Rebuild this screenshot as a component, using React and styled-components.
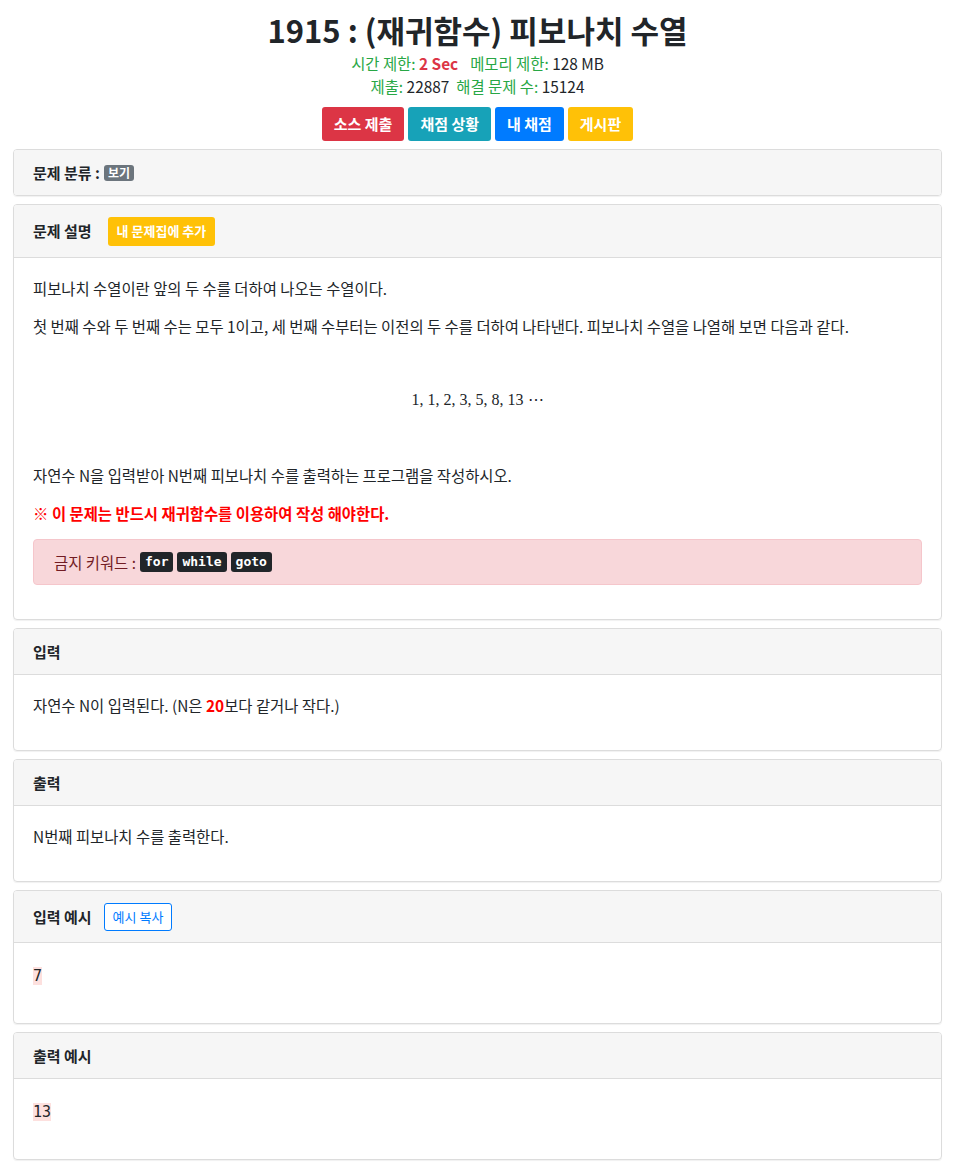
import styled, { createGlobalStyle } from 'styled-components';

const GlobalStyle = createGlobalStyle`
  body {
    margin: 0;
    background: #fff;
    color: #212529;
    font-family: "Noto Sans CJK KR", "Noto Sans", sans-serif;
    font-size: 15.4px;
    line-height: 22px;
  }
  * { box-sizing: border-box; }
`;

const Page = styled.div`
  padding: 0 11px 8px 13px;
  display: flex;
  flex-direction: column;
  gap: 8px;
`;

const Head = styled.div`
  display: flex;
  flex-direction: column;
  align-items: center;
`;

const Title = styled.h1`
  margin: 11px 0 3px;
  font-size: 31px;
  line-height: 38px;
  font-weight: 700;
  color: #212529;
`;

const Meta = styled.div`
  font-size: 15.4px;
  line-height: 23px;
  display: flex;
  gap: ${(p) => p.$gap || 12}px;
`;

const Label = styled.span`
  color: #28a745;
`;

const Strong = styled.b`
  color: ${(p) => p.color || 'inherit'};
  font-weight: 700;
`;

const Buttons = styled.div`
  margin-top: 9px;
  display: flex;
  gap: 4px;
`;

const Btn = styled.span`
  display: inline-flex;
  align-items: center;
  height: 34px;
  padding: 0 12px;
  border-radius: 3px;
  background: ${(p) => p.bg};
  color: #fff;
  font-weight: 700;
  font-size: 15px;
`;

const Card = styled.section`
  border: 1px solid #dcdcdc;
  border-radius: 4px;
  box-shadow: 0 1px 1px rgba(0, 0, 0, 0.06);
  overflow: hidden;
`;

const CardHeader = styled.div`
  background: #f6f6f6;
  padding: 0 19px;
  height: ${(p) => p.$tall || 46}px;
  display: flex;
  align-items: center;
  gap: ${(p) => p.$gap || 4}px;
  font-weight: 700;
  font-size: 15px;
  border-bottom: ${(p) => (p.$last ? 'none' : '1px solid #dcdcdc')};
`;

const CardBody = styled.div`
  padding: 19px 19px 18px;
`;

const P = styled.p`
  margin: 0 0 16px;
  color: ${(p) => p.color || '#212529'};
  font-weight: ${(p) => (p.$bold ? 700 : 400)};
`;

const Formula = styled.div`
  text-align: center;
  font-family: "Liberation Serif", "DejaVu Serif", serif;
  font-size: 16px;
  padding: 52px 0 53px;
  line-height: 22px;
`;

const Badge = styled.span`
  display: inline-flex;
  align-items: center;
  height: 16px;
  padding: 0 4px;
  border-radius: 3px;
  background: #6c757d;
  color: #fff;
  font-size: 12px;
  font-weight: 700;
`;

const SmallBtn = styled.span`
  display: inline-flex;
  align-items: center;
  height: ${(p) => (p.$outline ? 28 : 29)}px;
  padding: 0 ${(p) => (p.$outline ? 8 : 9)}px;
  border-radius: 3px;
  font-size: 13px;
  font-weight: ${(p) => (p.$outline ? 400 : 700)};
  background: ${(p) => (p.$outline ? '#fff' : '#ffc107')};
  color: ${(p) => (p.$outline ? '#007bff' : '#fff')};
  border: ${(p) => (p.$outline ? '1px solid #007bff' : 'none')};
`;

const Alert = styled.div`
  background: #f8d7da;
  border: 1px solid #f5c6cb;
  border-radius: 4px;
  color: #721c24;
  padding: 11px 20px;
  margin-top: -1px;
  margin-bottom: 16px;
  display: flex;
  align-items: center;
  gap: 4px;
`;

const Keyword = styled.code`
  display: inline-flex;
  align-items: center;
  height: 20px;
  padding: 0 5px;
  border-radius: 3px;
  background: #212529;
  color: #fff;
  font-family: "DejaVu Sans Mono", monospace;
  font-weight: 700;
  font-size: 13px;
`;

const Sample = styled.pre`
  margin: 0 0 18px;
  padding: 3px 0 0;
  font-family: "DejaVu Sans Mono", monospace;
  font-size: 15px;
  line-height: 22px;
  span {
    background: #fde0de;
    color: #212529;
  }
`;

export default function App() {
  return (
    <>
      <GlobalStyle />
      <Page>
        <Head>
          <Title>1915 : (재귀함수) 피보나치 수열</Title>
          <Meta>
            <span>
              <Label>시간 제한:</Label> <Strong color="#dc3545">2 Sec</Strong>
            </span>
            <span>
              <Label>메모리 제한:</Label> 128 MB
            </span>
          </Meta>
          <Meta $gap={7}>
            <span>
              <Label>제출:</Label> 22887
            </span>
            <span>
              <Label>해결 문제 수:</Label> 15124
            </span>
          </Meta>
          <Buttons>
            <Btn bg="#dc3545">소스 제출</Btn>
            <Btn bg="#17a2b8">채점 상황</Btn>
            <Btn bg="#007bff">내 채점</Btn>
            <Btn bg="#ffc107">게시판</Btn>
          </Buttons>
        </Head>

        <Card>
          <CardHeader $last $tall={45}>
            문제 분류 : <Badge>보기</Badge>
          </CardHeader>
        </Card>

        <Card>
          <CardHeader $tall={53} $gap={16}>
            문제 설명 <SmallBtn>내 문제집에 추가</SmallBtn>
          </CardHeader>
          <CardBody>
            <P>피보나치 수열이란 앞의 두 수를 더하여 나오는 수열이다.</P>
            <P style={{ marginBottom: 0 }}>
              첫 번째 수와 두 번째 수는 모두 1이고, 세 번째 수부터는 이전의 두 수를 더하여 나타낸다. 피보나치 수열을 나열해 보면 다음과 같다.
            </P>
            <Formula>1, 1, 2, 3, 5, 8, 13 ⋯</Formula>
            <P>자연수 N을 입력받아 N번째 피보나치 수를 출력하는 프로그램을 작성하시오.</P>
            <P color="#ff0000" $bold>
              ※ 이 문제는 반드시 재귀함수를 이용하여 작성 해야한다.
            </P>
            <Alert>
              금지 키워드 : <Keyword>for</Keyword>
              <Keyword>while</Keyword>
              <Keyword>goto</Keyword>
            </Alert>
          </CardBody>
        </Card>

        <Card>
          <CardHeader>입력</CardHeader>
          <CardBody>
            <P>
              자연수 N이 입력된다. (N은 <Strong color="#ff0000">20</Strong>보다 같거나 작다.)
            </P>
          </CardBody>
        </Card>

        <Card>
          <CardHeader>출력</CardHeader>
          <CardBody>
            <P>N번째 피보나치 수를 출력한다.</P>
          </CardBody>
        </Card>

        <Card>
          <CardHeader $tall={52} $gap={12}>
            입력 예시 <SmallBtn $outline>예시 복사</SmallBtn>
          </CardHeader>
          <CardBody>
            <Sample>
              <span>7</span>
            </Sample>
          </CardBody>
        </Card>

        <Card>
          <CardHeader>출력 예시</CardHeader>
          <CardBody>
            <Sample>
              <span>13</span>
            </Sample>
          </CardBody>
        </Card>
      </Page>
    </>
  );
}
